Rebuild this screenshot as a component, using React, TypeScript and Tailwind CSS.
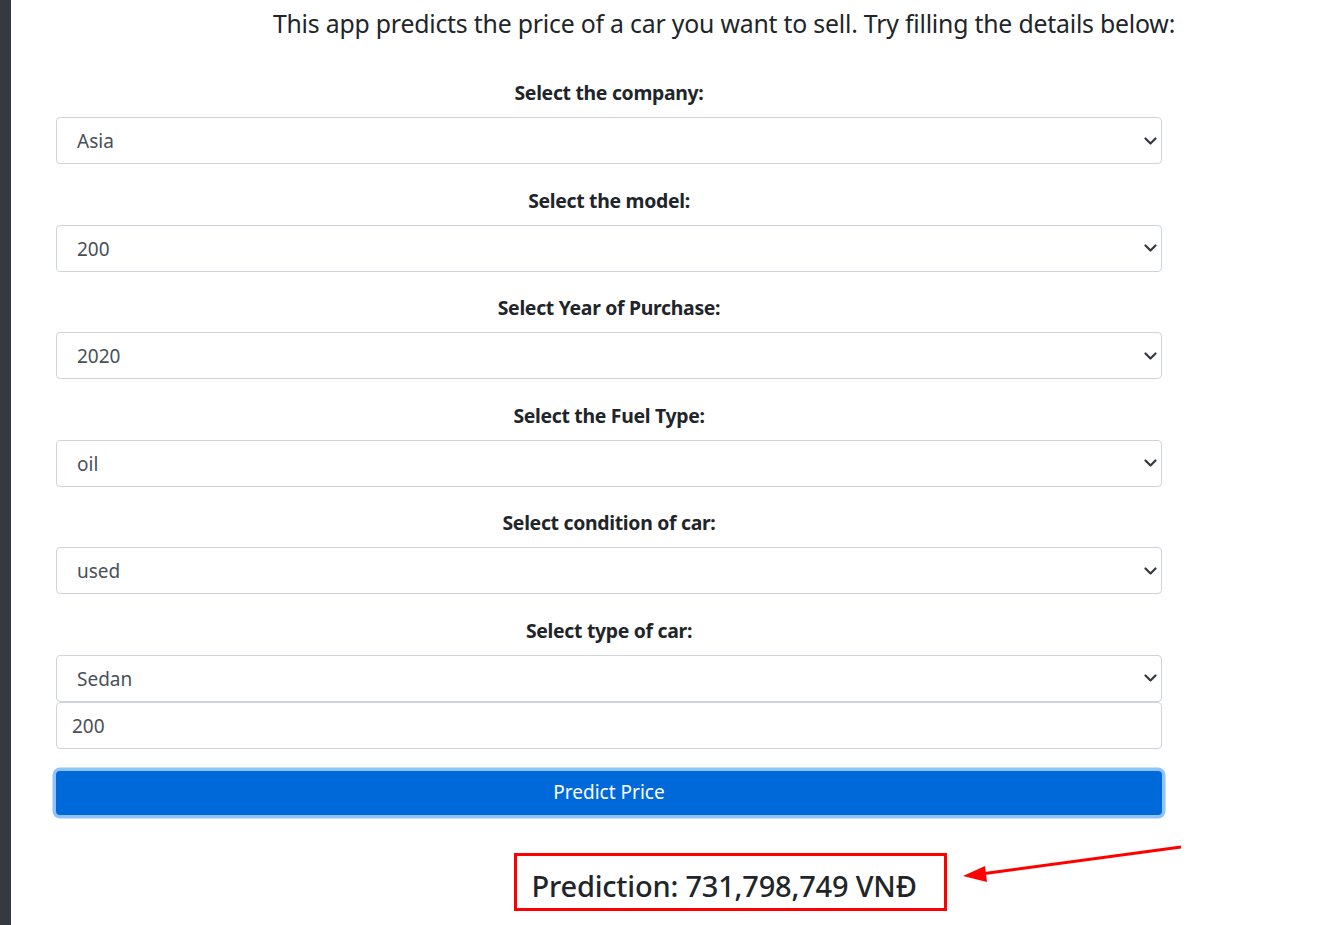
import React from "react";

const Chevron = () => (
  <svg className="pointer-events-none absolute right-[5px] top-1/2 -translate-y-1/2" width="13" height="9" viewBox="0 0 13 9">
    <path d="M1.5 2l5 5 5-5" fill="none" stroke="#343a40" strokeWidth="2.2" strokeLinecap="round" strokeLinejoin="round" />
  </svg>
);

const fields: { label: string; value: string }[] = [
  { label: "Select the company:", value: "Asia" },
  { label: "Select the model:", value: "200" },
  { label: "Select Year of Purchase:", value: "2020" },
  { label: "Select the Fuel Type:", value: "oil" },
  { label: "Select condition of car:", value: "used" },
  { label: "Select type of car:", value: "Sedan" },
];

export default function App() {
  return (
    <div className="flex min-h-[925px] w-full bg-white text-[#212529]" style={{ fontFamily: '"Noto Sans", "Open Sans", sans-serif' }}>
      <div className="w-[11px] shrink-0 bg-[#343a40]" />
      <div className="relative flex-1">
        <div className="flex justify-center pl-[113px] pt-[5px]">
          <h1 className="text-[24.8px] leading-[36px] font-normal tracking-[-0.2px] text-[#212529]">
            This app predicts the price of a car you want to sell. Try filling the details below:
          </h1>
        </div>
        <div className="ml-[45px] w-[1106px] pt-[37px]">
          {fields.map((f, i) => (
            <div key={i} className={i === 0 ? "" : "mt-[21.5px]"}>
              <div className="h-[30px] text-center text-[19.4px] font-bold leading-[30px] tracking-[-0.3px]">{f.label}</div>
              <div className="relative mt-[9px]">
                <select
                  defaultValue={f.value}
                  className="block h-[47px] w-full appearance-none rounded-[4px] border border-[#ced4da] bg-white pl-[20px] pt-[2px] text-[19px] text-[#495057] outline-none"
                  style={{ fontFamily: '"Noto Sans", "Open Sans", sans-serif' }}
                >
                  <option>{f.value}</option>
                </select>
                <Chevron />
              </div>
            </div>
          ))}
          <input
            defaultValue="200"
            className="block h-[47px] w-full rounded-[4px] border border-[#ced4da] bg-white pl-[15px] pt-[2px] text-[19px] text-[#495057] outline-none"
            style={{ fontFamily: '"Noto Sans", "Open Sans", sans-serif' }}
          />
          <div className="mt-[22px]">
            <button className="block h-[44px] w-full rounded-[4px] bg-[#0069d9] text-[19px] text-white shadow-[0_0_0_3.5px_#8fc3fb]">
              Predict Price
            </button>
          </div>
          <div className="mt-[38px] flex justify-center pl-[242px]">
            <div className="flex h-[58px] w-[433px] items-end border-[3px] border-[#ff0000] pb-[2px] pl-[15px]">
              <span className="text-[29px] font-medium leading-[40px] tracking-[-0.2px] text-[#212529]">Prediction: 731,798,749 VNĐ</span>
            </div>
          </div>
        </div>
        <svg className="pointer-events-none absolute left-[940px] top-[836px]" width="240" height="50" viewBox="0 0 240 50">
          <line x1="230" y1="11" x2="30" y2="38" stroke="#ff0000" strokeWidth="3" />
          <polygon points="12,40 34,30 36,46" fill="#ff0000" />
        </svg>
      </div>
    </div>
  );
}
